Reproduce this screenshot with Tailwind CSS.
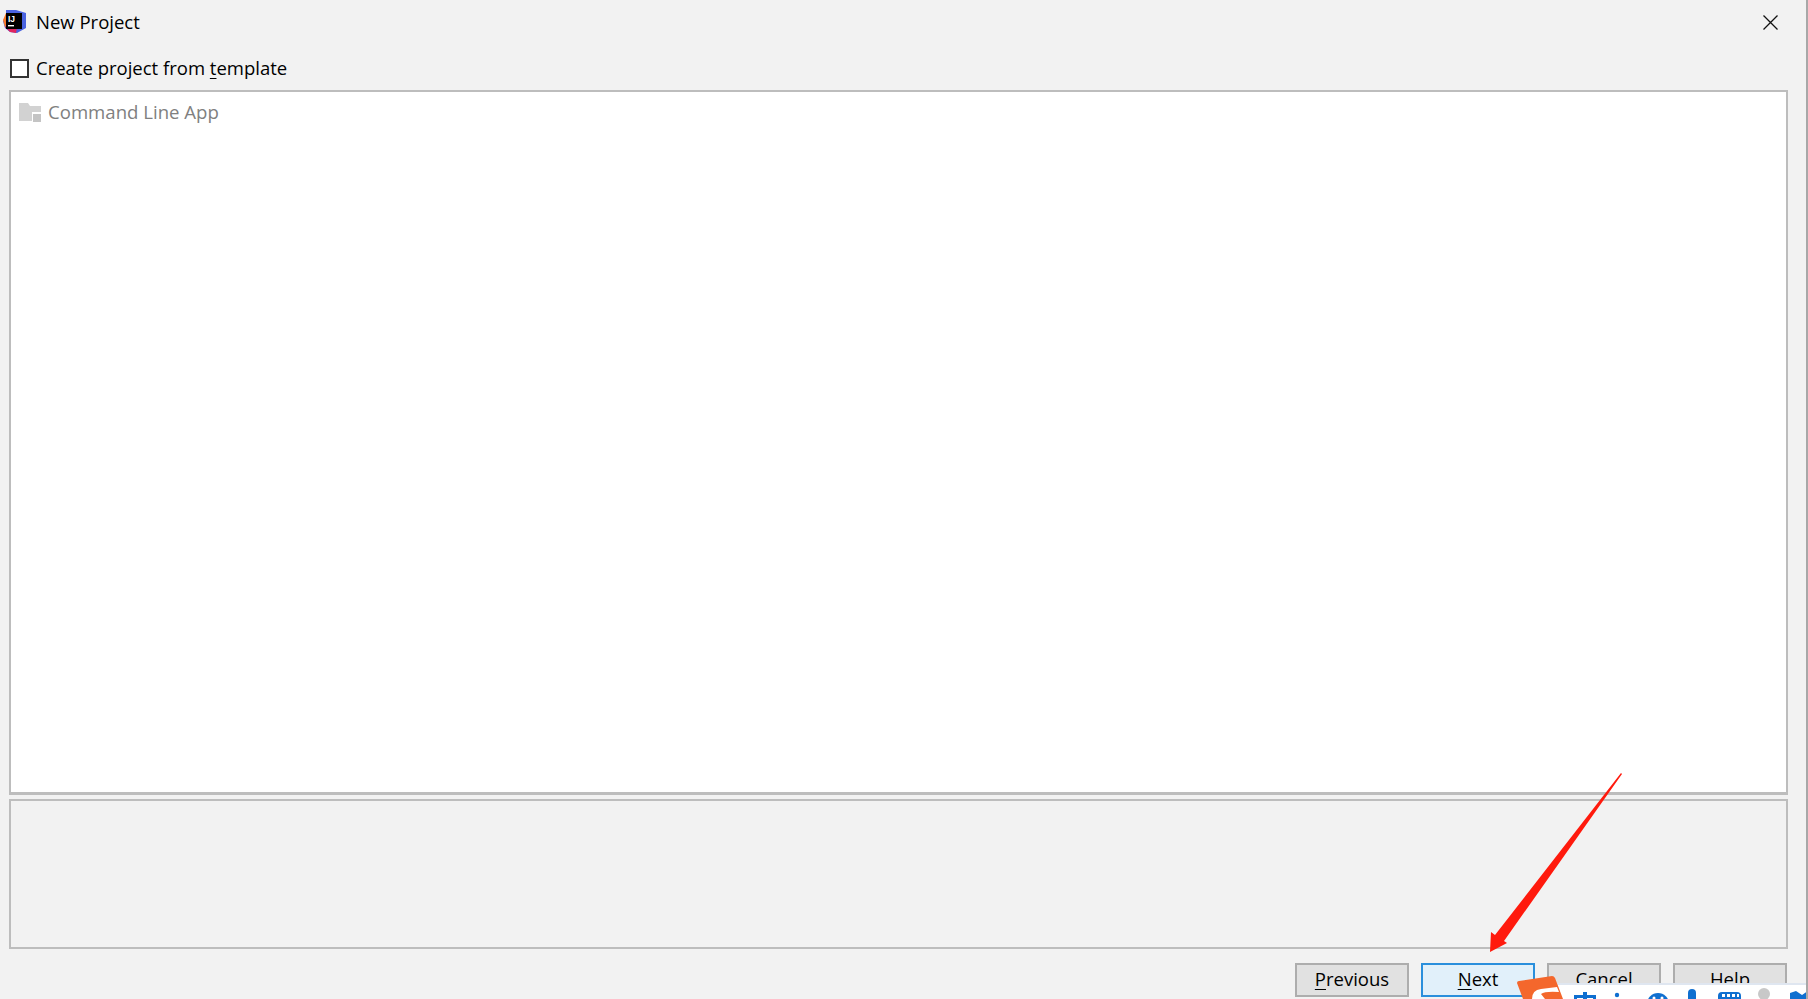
<!DOCTYPE html>
<html lang="en">
<head>
  <meta charset="UTF-8" />
  <title>New Project</title>
  <script src="https://cdn.jsdelivr.net/npm/@tailwindcss/browser@4"></script>
</head>
<body class="m-0 overflow-hidden">
  <div class="relative w-[1808px] h-[999px] overflow-hidden bg-[#f2f2f2] font-['Open_Sans','Noto_Sans',sans-serif] text-[#000] border-r-2 border-[#a8a8a8]">

    <!-- title bar -->
    <div class="flex items-center h-[44px] pl-[3px] pr-[28px]">
      <svg class="w-[24px] h-[24px] shrink-0" viewBox="0 0 24 24">
        <path d="M3 0 L13 0 L23 3 L23 18 L14 23 L7 22 L2 18 L0 11 L3 5 Z" fill="#4a63e0" />
        <path d="M3 3 L0 10 L2 17 L4 17 Z" fill="#f97a2b" />
        <path d="M2 17 L7 22 L13 23 L14 18 L3 16 Z" fill="#e0245e" />
        <rect x="3" y="3" width="16" height="16" fill="#000" />
        <text x="5" y="11.5" font-size="8.5" font-weight="700" fill="#fff" font-family="Liberation Sans, sans-serif">IJ</text>
        <rect x="5" y="15" width="6" height="1.4" fill="#fff" />
      </svg>
      <span class="ml-[9px] text-[18.5px] leading-[24px]">New Project</span>
      <svg class="ml-auto w-[15px] h-[15px]" viewBox="0 0 15 15" fill="none" stroke="#111" stroke-width="1.3">
        <path d="M0.5 0.5 L14.5 14.5 M14.5 0.5 L0.5 14.5" />
      </svg>
    </div>

    <!-- template checkbox -->
    <div class="flex items-center h-[24px] mt-[12px] pl-[10px]">
      <span class="w-[19px] h-[19px] bg-white border-[2px] border-[#333]"></span>
      <span class="ml-[7px] text-[18.5px] leading-[24px]">Create project from <span class="underline underline-offset-[3px]">t</span>emplate</span>
    </div>

    <!-- template list -->
    <div class="ml-[9px] mt-[10px] w-[1779px] h-[705px] bg-white border-[2px] border-[#bdbdbd] border-b-[3px] pl-[8px] pt-[8px]">
      <div class="flex items-center h-[24px]">
        <svg class="w-[22px] h-[19px] shrink-0" viewBox="0 0 22 19">
          <path d="M0 0 H9 L11 3 H22 V9 H13 V18 H0 Z" fill="#d2d2d2" />
          <rect x="14" y="11" width="8" height="8" fill="#c4c4c4" />
        </svg>
        <span class="ml-[7px] text-[18.6px] leading-[24px] text-[#808080]">Command Line App</span>
      </div>
    </div>

    <!-- description panel -->
    <div class="ml-[9px] mt-[4px] w-[1779px] h-[150px] bg-[#f2f2f2] border-[2px] border-[#bdbdbd]"></div>

    <!-- buttons -->
    <div class="flex justify-end gap-[12px] mt-[14px] mr-[19px] text-[18.5px]">
      <button class="w-[114px] h-[34px] pb-[3px] bg-[#e1e1e1] border-[2px] border-[#adadad] leading-[26px]"><span class="underline underline-offset-[3px]">P</span>revious</button>
      <button class="w-[114px] h-[34px] pb-[3px] bg-[#e1f0fa] border-[2px] border-[#2a8fdc] leading-[26px]"><span class="underline underline-offset-[3px]">N</span>ext</button>
      <button class="w-[114px] h-[34px] pb-[3px] bg-[#e1e1e1] border-[2px] border-[#adadad] leading-[26px]">Cancel</button>
      <button class="w-[114px] h-[34px] pb-[3px] bg-[#e1e1e1] border-[2px] border-[#adadad] leading-[26px]">Help</button>
    </div>

    <!-- red annotation arrow -->
    <svg class="absolute left-0 top-0 w-[1808px] h-[999px] pointer-events-none" viewBox="0 0 1808 999">
      <polygon points="1622,774 1504,941 1507,943 1490,952 1491,932 1495,935 1621,773" fill="#ff1a0d" />
    </svg>

    <!-- IME toolbar -->
    <div class="absolute left-[1557px] top-[983px] w-[251px] h-[16px] bg-white border-t-[2px] border-[#dfe6f0]">
      <svg class="absolute left-0 top-0 w-[251px] h-[14px]" viewBox="0 0 251 14">
        <g fill="#0f6fd0">
          <path d="M26 7 H30 V10 H39 V14 H36 V13 H30 V14 H26 V13 H20 V14 H17 V10 H26 Z" />
          <circle cx="60" cy="10" r="2.2" />
          <circle cx="101" cy="19" r="11" />
          <path d="M131 14 V8 A4 4 0 0 1 139 8 V14 Z" />
          <path d="M161 11 Q161 7 165 7 H180 Q184 7 184 11 V14 H161 Z" />
          <path d="M233 8 L239 6 L245 10 L251 6 V14 H233 Z" />
        </g>
        <g fill="#fff">
          <rect x="165" y="9" width="3" height="3" />
          <rect x="170" y="9" width="3" height="3" />
          <rect x="175" y="9" width="3" height="3" />
          <rect x="180" y="9" width="2" height="3" />
          <circle cx="97" cy="13" r="1.5" />
          <circle cx="105" cy="13" r="1.5" />
        </g>
        <circle cx="207" cy="9" r="6" fill="#c8c8c8" />
      </svg>
    </div>

    <!-- sogou logo corner -->
    <svg class="absolute left-[1517px] top-[975px] w-[46px] h-[24px]" viewBox="0 0 46 24">
      <path d="M0 8 Q0 6 2 6 L35 1 Q37 1 38 3 L46 24 H6 Z" fill="#f4672c" />
      <path d="M40 12 L42 17 Q28 16 24 19 L28 24 H15 Q15 15 24 14 Z" fill="#fff" />
    </svg>
  </div>
</body>
</html>
